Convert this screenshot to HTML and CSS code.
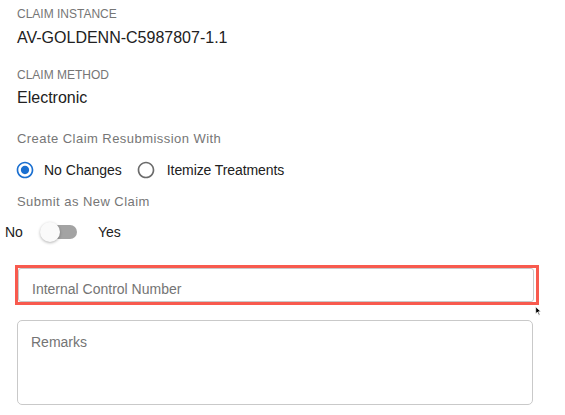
FILE: index.html
```html
<!DOCTYPE html>
<html lang="en">
<head>
    <meta charset="UTF-8">
    <meta name="viewport" content="width=device-width, initial-scale=1.0">
    <title>Claim Resubmission</title>
    <link rel="stylesheet" href="styles.css">
</head>
<body>
    <div class="form">
        <div class="field-label first">CLAIM INSTANCE</div>
        <div class="field-value">AV-GOLDENN-C5987807-1.1</div>

        <div class="field-label">CLAIM METHOD</div>
        <div class="field-value small-gap">Electronic</div>

        <div class="group-label">Create Claim Resubmission With</div>
        <div class="radio-row">
            <label class="radio">
                <svg class="radio-icon checked" viewBox="0 0 24 24" width="20" height="20">
                    <path d="M12 7c-2.76 0-5 2.24-5 5s2.24 5 5 5 5-2.24 5-5-2.240-5-5-5zm0-5C6.48 2 2 6.48 2 12s4.48 10 10 10 10-4.48 10-10S17.52 2 12 2zm0 18c-4.42 0-8-3.58-8-8s3.58-8 8-8 8 3.58 8 8-3.58 8-8 8z"/>
                </svg>
                <span>No Changes</span>
            </label>
            <label class="radio">
                <svg class="radio-icon" viewBox="0 0 24 24" width="20" height="20">
                    <path d="M12 2C6.48 2 2 6.48 2 12s4.48 10 10 10 10-4.48 10-10S17.52 2 12 2zm0 18c-4.42 0-8-3.58-8-8s3.58-8 8-8 8 3.58 8 8-3.58 8-8 8z"/>
                </svg>
                <span>Itemize Treatments</span>
            </label>
        </div>

        <div class="group-label tight">Submit as New Claim</div>
        <div class="switch-row">
            <span>No</span>
            <span class="switch">
                <span class="switch-track"></span>
                <span class="switch-knob"></span>
            </span>
            <span>Yes</span>
        </div>

        <div class="highlight">
            <input type="text" class="text-input" placeholder="Internal Control Number">
        </div>

        <textarea class="text-area" placeholder="Remarks"></textarea>
    </div>

    <svg class="cursor" viewBox="0 0 10 14" width="7" height="10">
        <path d="M1 1 L1 11 L3.5 8.5 L5.5 13 L7 12.3 L5 8 L8.5 8 Z" fill="#000" stroke="#fff" stroke-width="1"/>
    </svg>
</body>
</html>
```

FILE: styles.css
```css
body {
    font-family: "Liberation Sans", Arial, sans-serif;
    background-color: #fff;
    color: #212121;
    margin: 0;
    padding: 0;
}

.form {
    position: relative;
    width: 516px;
    padding: 0 0 0 17px;
}

.field-label {
    font-size: 12px;
    line-height: 16px;
    color: #767676;
    margin-top: 19px;
}

.field-label.first {
    margin-top: 6px;
}

.field-value {
    font-size: 16px;
    line-height: 20px;
    margin-top: 6px;
}

.field-value.small-gap {
    margin-top: 5px;
}

.group-label {
    font-size: 13px;
    line-height: 20px;
    color: #767676;
    letter-spacing: 0.45px;
    margin-top: 21px;
}

.group-label.tight {
    margin-top: 7px;
}

.radio-row {
    display: flex;
    align-items: center;
    height: 30px;
    margin-top: 6px;
    margin-left: -2px;
}

.radio {
    display: flex;
    align-items: center;
    gap: 9px;
    font-size: 14px;
    margin-right: 14px;
}

.radio + .radio span {
    margin-left: 2px;
    letter-spacing: -0.1px;
}

.radio-icon {
    fill: #6b6b6b;
}

.radio-icon.checked {
    fill: #1a6fd0;
}

.switch-row {
    display: flex;
    align-items: center;
    height: 30px;
    margin-top: 5px;
    margin-left: -12px;
    font-size: 14px;
}

.switch {
    position: relative;
    width: 38px;
    height: 20px;
    margin: 0 20px 0 17px;
}

.switch-track {
    position: absolute;
    left: 3px;
    top: 3px;
    width: 34px;
    height: 14px;
    border-radius: 7px;
    background-color: #a3a3a3;
}

.switch-knob {
    position: absolute;
    left: 0;
    top: 0;
    width: 20px;
    height: 20px;
    border-radius: 50%;
    background-color: #fafafa;
    box-shadow: 0 1px 3px rgba(0, 0, 0, 0.3);
}

.highlight {
    margin: 18px 0 0 -2px;
    width: 516px;
    padding-right: 2px;
    border: 3px solid #f85a4e;
}

.text-input, .text-area {
    display: block;
    width: 100%;
    box-sizing: border-box;
    border: 1px solid #c9c9c9;
    border-radius: 3px;
    font-family: "Liberation Sans", Arial, sans-serif;
    font-size: 14px;
    color: #212121;
    padding: 0 13px;
    outline: none;
}

.text-input {
    height: 34px;
    padding-top: 8px;
}

.text-area {
    height: 85px;
    margin-top: 15px;
    padding-top: 13px;
    border-radius: 5px;
    resize: none;
}

.text-input::placeholder, .text-area::placeholder {
    color: #747474;
    opacity: 1;
}

.cursor {
    position: absolute;
    left: 535px;
    top: 306px;
}
```
